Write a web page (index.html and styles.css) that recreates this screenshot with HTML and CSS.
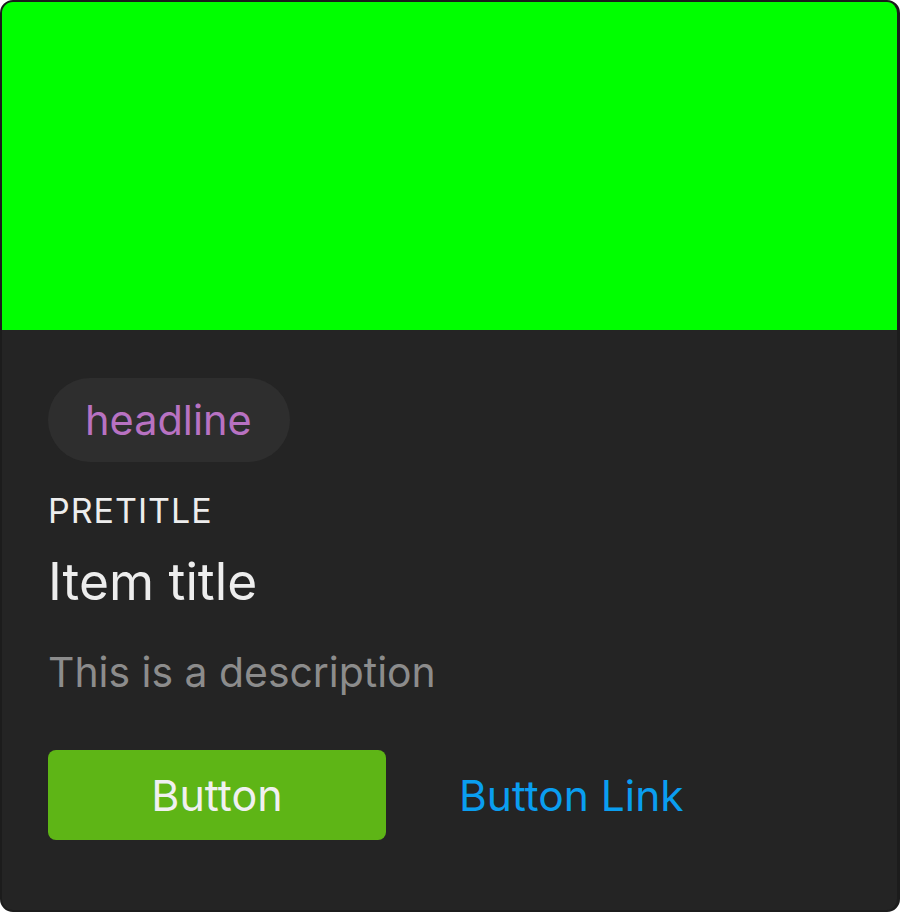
FILE: index.html
```html
<!DOCTYPE html>
<html>
<head>
<meta charset="utf-8">
<link rel="stylesheet" href="styles.css">
</head>
<body>
<div class="card">
  <div class="media"></div>
  <div class="content">
    <span class="tag">headline</span>
    <div class="pretitle">PRETITLE</div>
    <div class="title">Item title</div>
    <div class="desc">This is a description</div>
    <div class="actions">
      <button class="btn">Button</button>
      <a class="link">Button Link</a>
    </div>
  </div>
</div>
</body>
</html>
```
FILE: styles.css
```css
html, body {
  margin: 0;
  padding: 0;
  background: #ffffff;
}
body {
  font-family: Inter, "Noto Sans", sans-serif;
}
.card {
  width: 900px;
  height: 912px;
  box-sizing: border-box;
  border: 2px solid #1c1c1c;
  border-right-width: 3px;
  border-radius: 13px;
  background: #242424;
  overflow: hidden;
  display: flex;
  flex-direction: column;
}
.media {
  height: 328px;
  background: #00ff00;
  flex: none;
}
.content {
  padding: 48px 46px 0;
  display: flex;
  flex-direction: column;
  align-items: flex-start;
}
.tag {
  display: inline-flex;
  align-items: center;
  height: 84px;
  padding: 0 38px 0 37px;
  border-radius: 42px;
  background: #2e2e2e;
  color: #b872c2;
  font-size: 41.5px;
}
.pretitle {
  margin-top: 29px;
  color: #ededed;
  font-size: 34px;
  line-height: 40px;
  letter-spacing: 1px;
}
.title {
  margin-top: 19px;
  color: #ededed;
  font-size: 51.5px;
  line-height: 62px;
}
.desc {
  margin-top: 35px;
  color: #8c8c8c;
  font-size: 40.9px;
  line-height: 50px;
}
.actions {
  margin-top: 53px;
  display: flex;
  align-items: center;
  gap: 73px;
}
.btn {
  width: 338px;
  height: 90px;
  border: none;
  border-radius: 8px;
  background: #5eb516;
  color: #f0f0f0;
  font-family: Inter, "Noto Sans", sans-serif;
  font-size: 43px;
  padding: 0;
}
.link {
  color: #0a9ef0;
  font-size: 42.5px;
}
```
